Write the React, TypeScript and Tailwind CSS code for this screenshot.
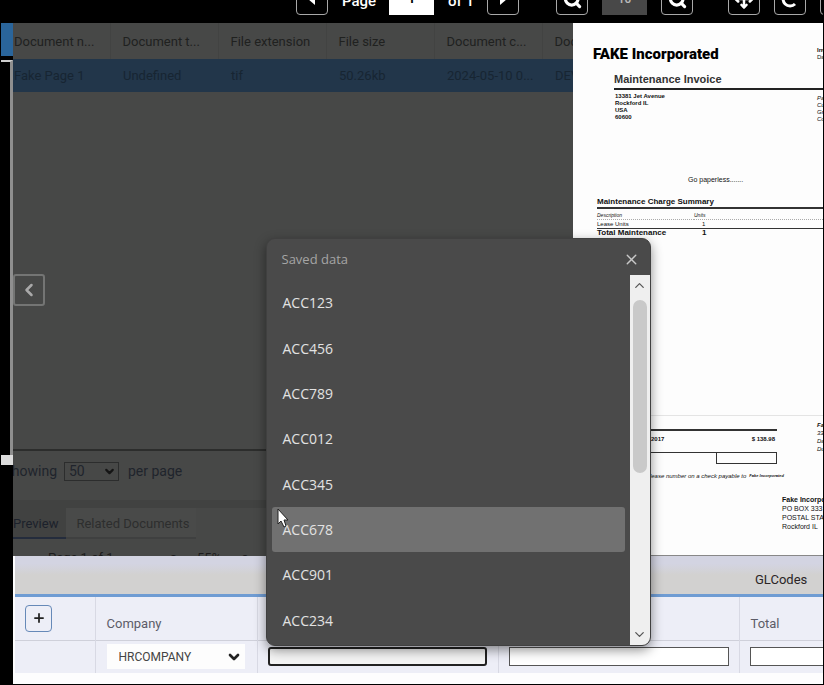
import React from 'react';
import { ChevronLeft, ChevronDown, ChevronUp, Move, Plus, Search, X } from 'lucide-react';

const documentColumns = [
  { label: 'Document n...', value: 'Fake Page 1', width: 'w-[97px]' },
  { label: 'Document t...', value: 'Undefined', width: 'w-[108px]' },
  { label: 'File extension', value: 'tif', width: 'w-[108px]' },
  { label: 'File size', value: '50.26kb', width: 'w-[108px]' },
  { label: 'Document c...', value: '2024-05-10 0...', width: 'w-[108px]' },
  { label: 'Document', value: 'DEV', width: '' },
];

const savedAccounts = ['ACC123', 'ACC456', 'ACC789', 'ACC012', 'ACC345', 'ACC678', 'ACC901', 'ACC234'];
const hoveredAccount = 'ACC678';

const ToolButton: React.FC<{ label: string; className?: string; children: React.ReactNode }> = ({
  label,
  className = '',
  children,
}) => (
  <button
    aria-label={label}
    className={`flex h-8 w-8 shrink-0 items-center justify-center rounded-[4px] border border-[#a8a8a8] text-white ${className}`}
  >
    {children}
  </button>
);

const Toolbar: React.FC = () => (
  <header className="flex h-[23px] items-end overflow-hidden bg-black pb-2 pl-[296px] text-[15px] font-medium text-white">
    <ToolButton label="Previous page">
      <svg width="8" height="12" viewBox="0 0 8 12" fill="currentColor"><path d="M7 0v12L0 6z" /></svg>
    </ToolButton>
    <label htmlFor="page" className="ml-[14px] w-[47px] shrink-0 leading-7">Page</label>
    <input id="page" defaultValue="1" className="h-8 w-[45px] shrink-0 bg-white pb-[2px] text-center text-[15px] text-black" />
    <span className="ml-[14px] w-[39px] shrink-0 leading-7">of 1</span>
    <ToolButton label="Next page">
      <svg width="8" height="12" viewBox="0 0 8 12" fill="currentColor"><path d="M1 0v12l7-6z" /></svg>
    </ToolButton>
    <ToolButton label="Zoom out" className="ml-[37px]">
      <Search size={19} strokeWidth={4} />
    </ToolButton>
    <input aria-label="Zoom" defaultValue="10" className="ml-[14px] h-8 w-[45px] shrink-0 bg-[#484848] text-center text-[12px] text-[#bbb]" />
    <ToolButton label="Zoom in" className="ml-[14px]">
      <Search size={19} strokeWidth={4} />
    </ToolButton>
    <ToolButton label="Move" className="ml-[35px]">
      <Move size={20} strokeWidth={3} />
    </ToolButton>
    <ToolButton label="Rotate" className="ml-[14px]">
      <svg width="20" height="20" viewBox="0 0 20 20" fill="none" stroke="currentColor" strokeWidth="3">
        <path d="M15 5a7 7 0 1 0 0 10" />
        <path d="M17 1v7h-7z" fill="currentColor" stroke="none" />
      </svg>
    </ToolButton>
    <ToolButton label="Fit" className="ml-[14px]">
      <Move size={20} />
    </ToolButton>
  </header>
);

const LeftRail: React.FC = () => (
  <aside className="flex w-[13px] shrink-0 flex-col bg-black pl-px">
    <div className="h-[33px] bg-[#2a659b]" />
    <div className="mt-1 h-[395px] border-t-2 border-r-[3px] border-t-[#cfcfcf] border-r-[#8f8f8f]" />
    <div className="h-[10px] bg-[#dcdcdc]" />
  </aside>
);

const DocumentPanel: React.FC = () => (
  <section className="relative flex min-w-0 flex-col overflow-hidden bg-[#474847]">
    <table className="w-full table-fixed text-left text-[13px]">
      <thead>
        <tr className="h-9 text-[#20211f]">
          {documentColumns.map((col, idx) => (
            <th
              key={idx}
              className={`overflow-hidden pt-[2px] font-normal whitespace-nowrap ${col.width} ${
                idx === 0 ? 'pl-px' : 'border-l border-[#424342] pl-3'
              }`}
            >
              {col.label}
            </th>
          ))}
        </tr>
      </thead>
      <tbody>
        <tr className="h-[33px] bg-[#22364a] text-[#172532]">
          {documentColumns.map((col, idx) => (
            <td key={idx} className={`overflow-hidden whitespace-nowrap ${idx === 0 ? 'pl-px' : 'pl-[13px]'}`}>
              {col.value}
            </td>
          ))}
        </tr>
      </tbody>
    </table>

    <button
      aria-label="Collapse panel"
      className="absolute top-[251px] left-0 flex h-8 w-8 items-center justify-center rounded-[3px] border-2 border-[#747574] text-[#a9a9a9]"
    >
      <ChevronLeft size={20} strokeWidth={3} />
    </button>

    <div className="flex-1" />

    {/* Paging */}
    <div className="flex h-[51px] items-start border-t-2 border-[#2c2d2c] pt-[11px] text-[14px] leading-[19px] text-[#1f242c]">
      <label htmlFor="per-page" className="flex w-[44px] justify-end overflow-hidden">Showing</label>
      <div className="relative ml-[7px]">
        <select id="per-page" className="h-[19px] w-[55px] appearance-none border border-[#2c2d2d] pl-1 text-[14px] leading-[17px]">
          <option>50</option>
        </select>
        <ChevronDown size={13} strokeWidth={4} className="pointer-events-none absolute top-[3px] right-[3px] text-[#151515]" />
      </div>
      <span className="ml-[9px]">per page</span>
    </div>

    {/* Tabs */}
    <div className="flex border-t-8 border-[#414241] text-[13px]">
      <button className="h-[31px] w-[53px] border-b-2 border-[#242c3c] bg-[#414241] pt-[2px] pr-2 text-[#1c212b]">Preview</button>
      <button className="h-[31px] w-[130px] border-b-2 border-[#3f4040] bg-[#494a49] pt-[2px] pl-1 text-[#2d2e2e]">Related Documents</button>
    </div>
    <div className="mt-[11px] flex h-[6px] gap-[56px] overflow-hidden pl-[35px] text-[13px] leading-4 text-[#1c1c1c]">
      <span>Page 1 of 1</span>
      <span className="flex gap-5">
        <span>o</span>
        <span>55%</span>
        <span>o</span>
      </span>
    </div>
  </section>
);

const InvoicePreview: React.FC = () => (
  <section className="flex min-w-0 flex-col overflow-hidden border-b border-[#888] bg-[#fdfdfd] font-['Liberation_Sans',sans-serif] whitespace-nowrap text-[#111]">
    <div className="flex items-center pt-[23px] pl-5 text-[6px] leading-[7px]">
      <h1 className="w-[224px] shrink-0 font-[Roboto,sans-serif] text-[15px] leading-4 font-black text-black">FAKE Incorporated</h1>
      <p><b>Invoice</b><br />Date</p>
    </div>
    <h2 className="mt-[10px] ml-[41px] border-b-2 border-[#222] pb-[2px] text-[11px] leading-[14px] font-bold text-[#333]">
      Maintenance Invoice
    </h2>
    <div className="ml-[42px] flex pt-[3px] text-[6px] leading-[7px]">
      <address className="w-[202px] shrink-0 font-bold not-italic">
        13381 Jet Avenue<br />Rockford IL<br />USA<br />60600
      </address>
      <p className="pt-[2px] italic">Page<br />Customer<br />Group<br />Code</p>
    </div>
    <p className="mt-[53px] ml-[115px] text-[7px] leading-[8px]">Go paperless.......</p>

    <table className="mt-[13px] ml-6 table-fixed text-left text-[6px] leading-[8px]">
      <caption className="border-b-2 border-[#333] text-left text-[8px] leading-[10px] font-bold">
        Maintenance Charge Summary
      </caption>
      <thead>
        <tr className="border-b border-dotted border-[#aaa] text-[5px] italic">
          <th className="w-[97px] pt-[2px] font-normal">Description</th>
          <th className="pt-[2px] font-normal">Units</th>
        </tr>
      </thead>
      <tbody>
        <tr className="border-b border-[#333]">
          <td>Lease Units</td>
          <td className="pl-[8px]">1</td>
        </tr>
        <tr className="text-[8px] font-bold">
          <td>Total Maintenance</td>
          <td className="pl-[8px]">1</td>
        </tr>
      </tbody>
    </table>

    <div className="flex-1" />

    {/* Payment slip */}
    <div className="border-t border-[#e4e4e4] pb-[24px] text-[6px] leading-[8px]">
      <div className="flex pt-[5px]">
        <div className="mt-2 w-[204px] shrink-0 border-t-2 border-[#333]">
          <div className="flex justify-between pt-1 pr-[2px] pl-[78px] font-bold">
            <span>2017</span>
            <span>$ 138.98</span>
          </div>
          <div className="mt-[9px] flex justify-end border-t border-[#333]">
            <div className="h-[11px] w-[61px] border border-t-0 border-[#333]" />
          </div>
        </div>
        <p className="ml-10 italic"><b>Fake</b><br />333<br />Date<br />Due</p>
      </div>
      <p className="mt-2 flex w-[211px] justify-end gap-[3px] italic">
        <span>lease number on a check payable to</span>
        <b className="text-[4px]">Fake Incorporated</b>
      </p>
      <address className="mt-[15px] ml-[209px] text-[7px] leading-[9px] not-italic">
        <b>Fake Incorporated</b><br />PO BOX 333<br />POSTAL STATION<br />Rockford IL
      </address>
    </div>
  </section>
);

const SavedDataPopup: React.FC = () => (
  <div
    role="dialog"
    aria-label="Saved data"
    className="absolute bottom-[27px] left-2 z-10 flex h-[408px] w-[385px] flex-col overflow-hidden rounded-[9px] border border-[#404040] bg-[#4a4a4a] font-['Open_Sans','Noto_Sans',sans-serif] shadow-[0_4px_12px_rgba(0,0,0,0.45)]"
  >
    <div className="flex h-9 shrink-0 items-end justify-between pr-[10px] pl-[15px] text-[13px] leading-5 text-[#a5a5a5]">
      <h2 className="pb-[6px]">Saved data</h2>
      <button aria-label="Close" className="pb-[7px] text-[#c8c8c8]"><X size={17} strokeWidth={2} /></button>
    </div>
    <div className="flex min-h-0 flex-1">
      <ul className="flex flex-1 flex-col px-[5px] pt-[5px] pb-[2px]">
        {savedAccounts.map((account) => (
          <li key={account} className="flex flex-1">
            <button
              className={`flex-1 rounded-[3px] pl-[11px] text-left text-[14px] text-[#e2e2e2] ${
                account === hoveredAccount ? 'bg-[#717171]' : ''
              }`}
            >
              {account}
            </button>
          </li>
        ))}
      </ul>
      <div className="flex w-5 flex-col items-center bg-[#efefef] py-[3px] text-[#555]">
        <ChevronUp size={15} strokeWidth={2} />
        <div className="mt-[7px] h-[173px] w-[14px] rounded-full bg-[#c9c9c9]" />
        <div className="flex-1" />
        <ChevronDown size={15} strokeWidth={2} />
      </div>
    </div>
    <svg className="pointer-events-none absolute top-[269px] left-[10px]" width="14" height="21" viewBox="0 0 14 21">
      <path d="M1 1v15l3-3 3 6 2-1-2-6h4z" fill="#fff" stroke="#222" strokeWidth="1" />
    </svg>
  </div>
);

const GLCodesPanel: React.FC = () => (
  <section className="bg-[#fdfdfe] pb-[11px] pl-[2px] text-[13px]">
    <div className="h-[41px] border-b-[3px] border-[#6f9cd3] bg-linear-to-b from-[#d3d4e2] from-20% to-[#d2d1d0] to-50% pl-[740px] leading-[47px] text-[#2b2526]">
      GLCodes
    </div>
    <table className="w-full table-fixed bg-[#edeef7] text-left text-[#5c5c68]">
      <thead>
        <tr className="h-[43px] border-b border-[#cfd0da]">
          <th className="w-20 pl-[10px]">
            <button aria-label="Add row" className="flex h-[27px] w-[27px] items-center justify-center rounded-[4px] border border-[#6689b8] text-[#222]">
              <Plus size={14} strokeWidth={3} />
            </button>
          </th>
          <th className="w-[162px] border-l border-[#d8d9e4] pt-[10px] pl-[11px] font-normal">Company</th>
          <th className="w-[241px] border-l border-[#d8d9e4]" />
          <th className="w-[241px] border-l border-[#d8d9e4]" />
          <th className="border-l border-[#d8d9e4] pt-[10px] pl-[11px] font-normal">Total</th>
        </tr>
      </thead>
      <tbody>
        <tr className="h-[33px]">
          <td />
          <td className="border-l border-[#d8d9e4] pl-[11px]">
            <div className="relative w-[138px]">
              <select aria-label="Company" className="block h-[25px] w-full appearance-none bg-[#fdfdfd] pl-3 text-[12px] text-[#444]">
                <option>HRCOMPANY</option>
              </select>
              <ChevronDown size={16} strokeWidth={4} className="pointer-events-none absolute top-[5px] right-[3px] text-[#222]" />
            </div>
          </td>
          <td className="relative border-l border-[#d8d9e4] pl-[10px]">
            <input aria-label="Account" className="block h-[19px] w-[219px] rounded-[3px] border-2 border-[#222] bg-[#f4f4f4]" />
            <SavedDataPopup />
          </td>
          <td className="border-l border-[#d8d9e4] pl-[10px]">
            <input aria-label="Description" className="block h-[19px] w-[220px] border border-[#555] bg-white" />
          </td>
          <td className="border-l border-[#d8d9e4] pl-[10px]">
            <input aria-label="Total" className="block h-[19px] w-full border border-r-0 border-[#555] bg-white" />
          </td>
        </tr>
      </tbody>
    </table>
  </section>
);

const App: React.FC = () => (
  <div className="flex min-h-screen flex-col overflow-hidden bg-black pr-px pb-px font-[Roboto,sans-serif]">
    <Toolbar />
    <div className="flex flex-1">
      <LeftRail />
      <main className="flex min-w-0 flex-1 flex-col">
        <div className="grid flex-1 grid-cols-[minmax(0,560px)_minmax(0,1fr)]">
          <DocumentPanel />
          <InvoicePreview />
        </div>
        <GLCodesPanel />
      </main>
    </div>
  </div>
);

export default App;
